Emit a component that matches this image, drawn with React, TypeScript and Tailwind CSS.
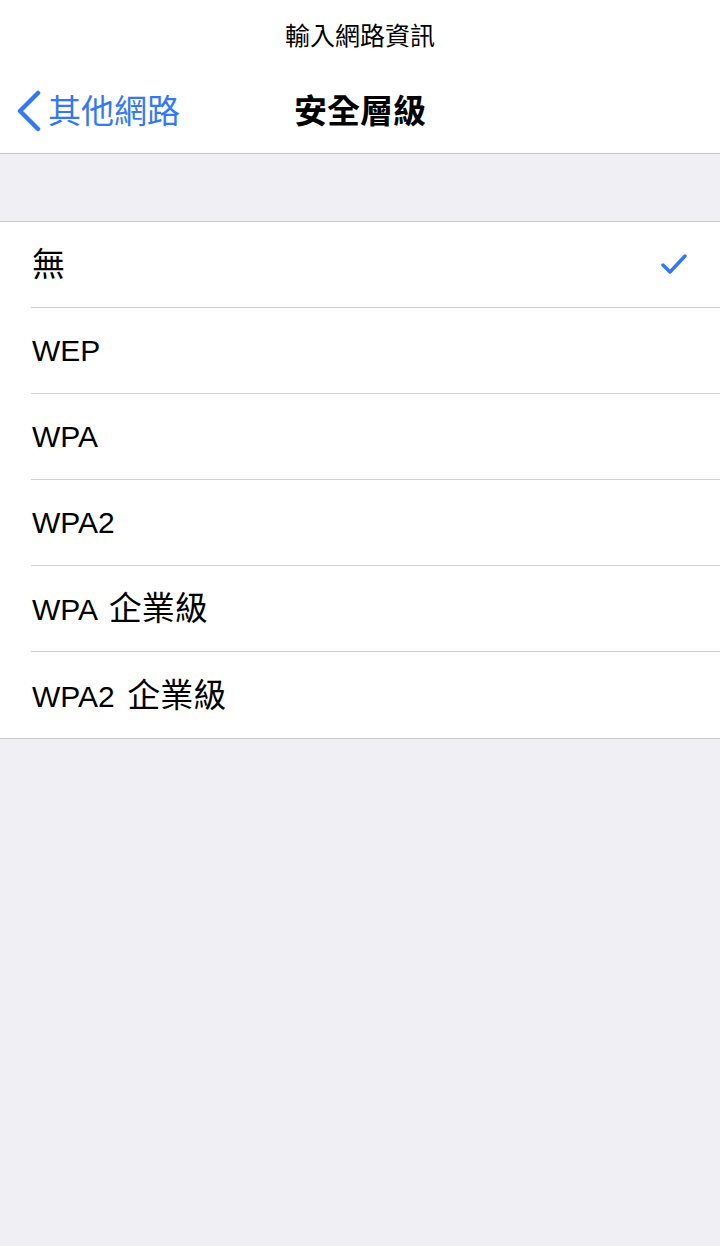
const font = { fontFamily: '"Liberation Sans", "Noto Sans CJK TC", sans-serif' };

const options = [
  { latin: "", cjk: "無" },
  { latin: "WEP", cjk: "" },
  { latin: "WPA", cjk: "" },
  { latin: "WPA2", cjk: "" },
  { latin: "WPA ", cjk: "企業級" },
  { latin: "WPA2 ", cjk: "企業級" },
];

export default function App() {
  return (
    <div className="min-h-[1246px] w-full bg-[#efeff4]" style={font}>
      {/* header */}
      <div className="bg-white border-b border-[#c8c7cc]">
        <div className="h-[74px] flex items-center justify-center text-[25px] text-black">
          輸入網路資訊
        </div>
        <div className="relative h-[79px] flex items-center justify-center pb-[5px]">
          <div className="absolute left-[14px] top-0 bottom-[5px] flex items-center gap-[6px] text-[#3478f6]">
            <svg width="28" height="42" viewBox="0 0 28 42" fill="none">
              <path
                d="M24 3 L6 21 L24 39"
                stroke="#3478f6"
                strokeWidth="4.5"
                strokeLinecap="round"
                strokeLinejoin="round"
              />
            </svg>
            <span className="text-[33px] leading-none">其他網路</span>
          </div>
          <span className="text-[33px] font-bold leading-none text-black">安全層級</span>
        </div>
      </div>

      {/* spacer */}
      <div className="h-[67px]" />

      {/* options */}
      <div className="bg-white border-y border-[#c8c7cc]">
        {options.map((o, i) => (
          <div key={i} className="pl-[31px]">
            <div
              className={
                "h-[86px] flex items-center justify-between pr-[32px] " +
                (i < options.length - 1 ? "border-b border-[#d1d1d6]" : "")
              }
            >
              <span className="text-[30px] text-black pl-px whitespace-pre leading-none">
                {o.latin}
                {o.cjk && (
                  <span className={"text-[33px] " + (o.latin ? "ml-[4px]" : "")}>{o.cjk}</span>
                )}
              </span>
              {i === 0 && (
                <svg width="28" height="22" viewBox="0 0 28 22" fill="none">
                  <path
                    d="M3 11 L10 18 L25 2"
                    stroke="#3478f6"
                    strokeWidth="3.5"
                    strokeLinecap="round"
                    strokeLinejoin="round"
                  />
                </svg>
              )}
            </div>
          </div>
        ))}
      </div>
    </div>
  );
}
